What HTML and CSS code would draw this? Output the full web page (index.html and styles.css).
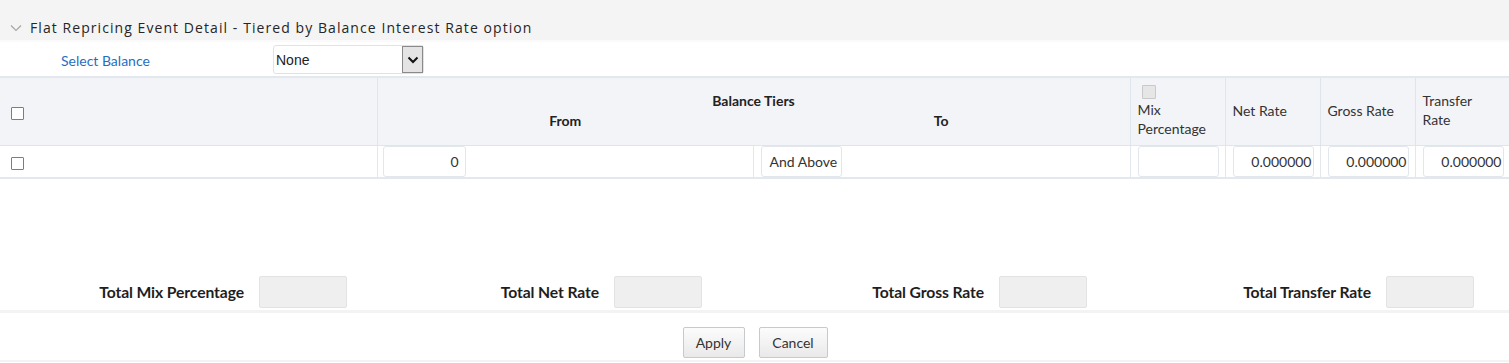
FILE: index.html
```html
<!DOCTYPE html>
<html>
<head>
<meta charset="utf-8">
<link rel="stylesheet" href="styles.css">
</head>
<body>
<div class="panel-head">
  <svg class="chev" width="12" height="8" viewBox="0 0 12 8"><polyline points="1,1.5 6,6.5 11,1.5" fill="none" stroke="#a8a8a8" stroke-width="1.2"/></svg>
  <span class="title">Flat Repricing Event Detail - Tiered by Balance Interest Rate option</span>
</div>
<div class="select-row">
  <span class="sel-label">Select Balance</span>
  <div class="select">
    <span class="sel-val">None</span>
    <span class="sel-btn"><svg width="12" height="8" viewBox="0 0 12 8"><polyline points="1.5,1.5 6,6 10.5,1.5" fill="none" stroke="#111" stroke-width="2"/></svg></span>
  </div>
</div>
<table class="grid">
  <colgroup>
    <col class="c-chk"><col class="c-from"><col class="c-to"><col class="c-rate"><col class="c-rate"><col class="c-rate"><col class="c-last">
  </colgroup>
  <thead>
    <tr class="h1">
      <th rowspan="2" class="th-chk"><span class="cb"></span></th>
      <th colspan="2" class="th-tiers">Balance Tiers</th>
      <th rowspan="2" class="th-txt th-mix"><span class="cb cb-dis"></span><br>Mix<br>Percentage</th>
      <th rowspan="2" class="th-txt">Net Rate</th>
      <th rowspan="2" class="th-txt">Gross Rate</th>
      <th rowspan="2" class="th-txt">Transfer<br>Rate</th>
    </tr>
    <tr class="h2">
      <th class="th-sub">From</th>
      <th class="th-sub">To</th>
    </tr>
  </thead>
  <tbody>
    <tr class="row">
      <td class="td-chk"><span class="cb"></span></td>
      <td class="td-in td-from"><span class="inp num">0</span></td>
      <td class="td-in td-to"><span class="inp txt">And Above</span></td>
      <td class="td-in"><span class="inp num"></span></td>
      <td class="td-in"><span class="inp num">0.000000</span></td>
      <td class="td-in"><span class="inp num">0.000000</span></td>
      <td class="td-in"><span class="inp num">0.000000</span></td>
    </tr>
  </tbody>
</table>
<div class="totals">
  <span class="t-label">Total Mix Percentage</span><span class="t-box"></span>
  <span class="t-label">Total Net Rate</span><span class="t-box"></span>
  <span class="t-label">Total Gross Rate</span><span class="t-box"></span>
  <span class="t-label">Total Transfer Rate</span><span class="t-box"></span>
</div>
<div class="actions">
  <button class="btn btn-apply">Apply</button>
  <button class="btn btn-cancel">Cancel</button>
</div>
</body>
</html>
```
FILE: styles.css
```css
* { box-sizing: border-box; }
html, body { margin: 0; padding: 0; background: #fff; }
body {
  font-family: Lato, "Noto Sans", sans-serif;
  font-size: 14px;
  color: #333;
  width: 1509px;
  height: 363px;
  overflow: hidden;
}
.panel-head {
  height: 42px;
  background: #f4f4f4;
  display: flex;
  align-items: center;
  padding: 14px 0 0 10px;
  border-bottom: 2px solid #fafafa;
}
.chev { margin-right: 8px; margin-top: 2px; }
.title {
  font-family: "Open Sans", sans-serif;
  font-size: 14px;
  color: #262626;
  letter-spacing: 1.07px;
}
.select-row {
  height: 34px;
  display: flex;
  align-items: center;
}
.sel-label {
  color: #1f6fbf;
  margin-left: 61px;
  width: 212px;
  padding-top: 2px;
}
.select {
  width: 151px;
  height: 29px;
  border: 1px solid #e2e2e2;
  border-radius: 3px;
  display: flex;
  align-items: stretch;
  margin-top: 1px;
}
.sel-val {
  flex: 1;
  display: flex;
  align-items: center;
  padding-left: 2px;
  padding-top: 1px;
  font-family: "Liberation Sans", sans-serif;
  font-size: 14px;
  color: #222;
}
.sel-btn {
  width: 21px;
  background: #e4e4e4;
  border: 1px solid #8a8a8a;
  display: flex;
  align-items: center;
  justify-content: center;
}
.grid {
  border-collapse: collapse;
  table-layout: fixed;
  width: 1509px;
}
.c-chk { width: 377px; }
.c-from { width: 376px; }
.c-to { width: 377px; }
.c-rate { width: 95px; }
.c-last { width: 94px; }
.grid thead th {
  background: #f3f4f7;
  font-weight: normal;
  padding: 0;
}
.grid thead tr.h1 { height: 34px; }
.grid thead tr.h2 { height: 34px; }
.grid thead tr.h1 th { border-top: 2px solid #e3e8ee; }
.th-chk, .th-txt, .th-tiers { border-left: 1px solid #dfe5ec; }
.th-chk { border-left: none; text-align: left; padding-left: 11px !important; }
.th-tiers {
  font-weight: bold !important;
  vertical-align: bottom;
  padding-bottom: 2px !important;
  color: #222;
}
.th-sub {
  font-weight: bold !important;
  vertical-align: top;
  padding-top: 1px !important;
  color: #222;
}
.grid thead tr.h2 th:first-child { border-left: 1px solid #dfe5ec; }
.th-txt {
  text-align: left;
  padding: 0 0 2px 7px !important;
  line-height: 19px;
  color: #333;
}
.th-mix { padding-top: 3px !important; line-height: 19px; vertical-align: top; }
.th-mix .cb { margin-left: 4px; }
.cb {
  display: inline-block;
  width: 13px;
  height: 13px;
  border: 1px solid #7d7d7d;
  background: #fff;
  border-radius: 1px;
  vertical-align: middle;
}
.cb-dis {
  width: 14px;
  height: 14px;
  background: #e6e6e6;
  border-color: #c9c9c9;
}
.row { height: 33px; }
.row td {
  border-top: 1px solid #dfe5ec;
  border-bottom: 2px solid #e3e8ee;
  padding: 0;
}
.td-chk { padding-left: 11px !important; }
.td-in { border-left: 1px solid #e3e8ee; padding-left: 7px !important; }
.td-from { padding-left: 5px !important; }
.td-to { padding-left: 7px !important; }
.inp {
  display: flex;
  align-items: center;
  width: 81px;
  height: 31px;
  border: 1px solid #e2e7ed;
  border-radius: 3px;
  background: #fff;
  color: #333;
  padding: 0 1px 0 7px;
}
.td-from .inp { width: 83px; padding-right: 6px; }
.inp.num { justify-content: flex-end; }
.inp.txt { justify-content: flex-start; padding-left: 8px; }
.totals {
  margin-top: 97px;
  display: grid;
  grid-template-columns: 259px 88px 267px 88px 297px 88px 299px 88px;
  align-items: center;
  height: 32px;
}
.t-label {
  text-align: right;
  padding-right: 15px;
  font-weight: bold;
  font-size: 15.7px;
  letter-spacing: -0.1px;
  color: #1e1e1e;
}
.t-box {
  height: 32px;
  background: #efefef;
  border: 1px solid #e3e3e3;
  border-radius: 2px;
}
.actions {
  margin-top: 2px;
  border-top: 3px solid #f3f3f3;
  border-bottom: 2px solid #f3f3f3;
  height: 52px;
  display: flex;
  justify-content: center;
  align-items: flex-start;
  gap: 14px;
  padding-left: 1px;
  padding-top: 14px;
}
.btn {
  font-family: Lato, "Noto Sans", sans-serif;
  font-size: 14px;
  color: #333;
  height: 31px;
  border: 1px solid #c6c9cd;
  border-radius: 2px;
  background: linear-gradient(#fcfcfc, #e9e9e9);
  padding: 0;
}
.btn-apply { width: 62px; }
.btn-cancel { width: 69px; }
```
